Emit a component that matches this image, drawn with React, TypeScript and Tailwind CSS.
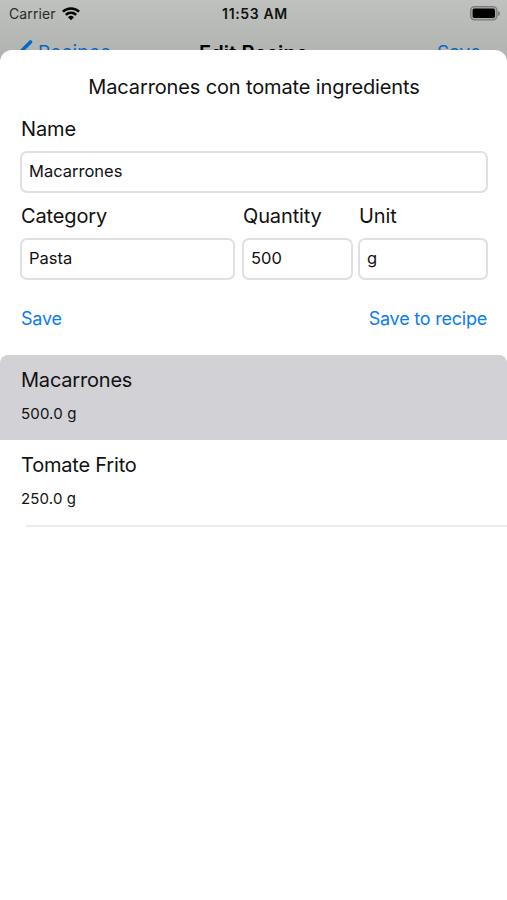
import { useState } from "react";

type Ingredient = {
  name: string;
  amount: string;
};

const ingredients: Ingredient[] = [
  { name: "Macarrones", amount: "500.0 g" },
  { name: "Tomate Frito", amount: "250.0 g" },
];

const WifiIcon = () => (
  <svg width="18" height="14" viewBox="0 0 18 14" fill="none" stroke="#000" strokeWidth="2.5">
    <path d="M0.9 4.7a11.6 11.6 0 0 1 16.2 0" />
    <path d="M3.8 7.9a7.4 7.4 0 0 1 10.4 0" />
    <path d="M9 13.2 6 10.2a4.3 4.3 0 0 1 6 0z" fill="#000" stroke="none" />
  </svg>
);

const BatteryIcon = () => (
  <svg width="31" height="15" viewBox="0 0 31 15">
    <rect x="0.7" y="0.7" width="26.2" height="13.2" rx="3.8" fill="#a9aaa8" stroke="#7b7c7a" strokeWidth="1.3" />
    <rect x="2.6" y="2.6" width="22.4" height="9.4" rx="1.8" fill="#000" />
    <path d="M28 5v5c1.2-.4 2-1.4 2-2.5S29.2 5.4 28 5z" fill="#7b7c7a" />
  </svg>
);

type FieldProps = {
  label: string;
  value: string;
  className?: string;
};

const Field = ({ label, value, className = "" }: FieldProps) => {
  const [text, setText] = useState(value);

  return (
    <label className={`block ${className}`}>
      <span className="block h-[25px] pl-px text-[20px] leading-[25px] tracking-[-0.13px]">{label}</span>
      <input
        value={text}
        onChange={(e) => setText(e.target.value)}
        className="mt-[9px] block h-[42px] w-full rounded-[7px] border-2 border-[#e0e0e0] bg-white px-[7px] pb-0.5 text-[16.5px] outline-none"
      />
    </label>
  );
};

const App = () => {
  const [selected, setSelected] = useState(0);

  return (
    <div className="flex h-[900px] w-[507px] flex-col overflow-hidden bg-linear-to-b from-[#bfc1be] from-0% to-[#b0b2af] to-[62px] font-['Inter',sans-serif] text-[#111]">
      {/* Status bar */}
      <div className="grid h-[27px] shrink-0 grid-cols-3 items-center pr-[6px] pl-[9px]">
        <div className="flex items-center gap-1.5">
          <span className="text-[14px] tracking-[0.12px] text-[#2a2a2a]">Carrier</span>
          <WifiIcon />
        </div>
        <span className="text-center text-[14px] font-semibold tracking-[0.65px]">11:53 AM</span>
        <div className="flex justify-end">
          <BatteryIcon />
        </div>
      </div>

      {/* Navigation bar, mostly hidden behind the sheet */}
      <div className="grid h-[23px] shrink-0 grid-cols-3 px-[18px] pt-[13px] text-[19px] leading-[26px]">
        <div className="flex h-[26px] items-start gap-1 text-[#0868c8]">
          <svg width="16" height="26" viewBox="0 0 16 26" fill="none" stroke="currentColor" strokeWidth="3.6" strokeLinecap="round">
            <path d="M12.5 2 1.5 13l11 11" />
          </svg>
          <span className="tracking-[0.2px]">Recipes</span>
        </div>
        <span className="text-center text-[20px] font-semibold tracking-[0.1px] whitespace-nowrap text-black">Edit Recipe</span>
        <span className="pr-2 text-right text-[#0868c8]">Save</span>
      </div>

      {/* Sheet */}
      <main className="relative flex-1 rounded-t-xl bg-white pt-[25px]">
        <h1 className="pl-px text-center text-[20px] leading-[25px] tracking-[-0.13px]">
          Macarrones con tomate ingredients
        </h1>

        <form className="pt-[17px] pr-[19px] pl-5" onSubmit={(e) => e.preventDefault()}>
          <Field label="Name" value="Macarrones" />
          <div className="mt-[11px] flex">
            <Field label="Category" value="Pasta" className="mr-[7px] w-[215px]" />
            <Field label="Quantity" value="500" className="mr-[5px] w-[111px]" />
            <Field label="Unit" value="g" className="flex-1" />
          </div>

          <div className="mt-[27px] flex justify-between px-px text-[18px] leading-6 tracking-[-0.22px] text-[#0a7cf5]">
            <button type="button">Save</button>
            <button type="submit">Save to recipe</button>
          </div>
        </form>

        <ul className="mt-6">
          {ingredients.map((item, index) => (
            <li
              key={item.name}
              onClick={() => setSelected(index)}
              className={`h-[85px] pt-[13px] pl-[21px] ${index === 0 ? "rounded-t-lg" : ""} ${
                selected === index ? "bg-[#d1d1d6]" : "bg-white"
              }`}
            >
              <p className="text-[20px] leading-[25px] tracking-[-0.2px]">{item.name}</p>
              <p className="mt-[11px] text-[15px] leading-5 tracking-[0.15px]">{item.amount}</p>
            </li>
          ))}
        </ul>
        <div className="ml-[26px] h-0.5 bg-[#ececee]" />
      </main>
    </div>
  );
};

export default App;
